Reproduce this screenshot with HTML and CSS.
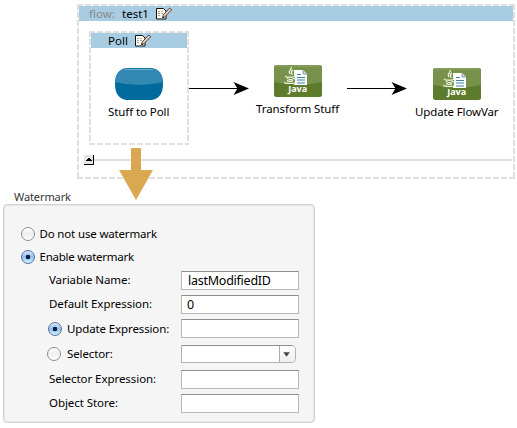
FILE: index.html
```html
<!DOCTYPE html>
<html lang="en">
<head>
<meta charset="utf-8">
<title>Poll watermark</title>
<link rel="stylesheet" href="styles.css">
</head>
<body>
<svg class="defs" width="0" height="0" aria-hidden="true">
  <defs>
    <symbol id="edit" viewBox="0 0 18 13">
      <path d="M1.500 1.500h7l2.500 2.500v8h-9.500z" fill="#fffff0" stroke="#111"/>
      <path d="M3 4.500h5M3 6.500h5M3 8.500h3" stroke="#aaa69a" stroke-dasharray="2 1"/>
      <path d="M7.500 11l.7-3L14.700 1l2 1.700L10 9.700z" fill="#ecd0c4" stroke="#30201c" stroke-width=".8"/>
      <path d="M7.500 11l.4-1.800 1.300 1.100z" fill="#111"/>
    </symbol>
    <symbol id="java" viewBox="0 0 48 32">
      <rect width="48" height="32" rx="2.500" fill="#5c7b2b"/>
      <path d="M0 2.500Q0 0 2.500 0h43Q48 0 48 2.500V17Q24 22 0 17z" fill="#78924b"/>
      <path d="M1 1h46" stroke="#9bb078" stroke-width=".7"/>
      <path d="M20 5h9l4 4v11H20z" fill="#fff"/>
      <path d="M29 5v4h4" fill="#c7d4d8" stroke="#668" stroke-width=".6"/>
      <path d="M23 9.500h4M23 12.500h8M23 15h8M23 18h8" stroke="#3781a5"/>
      <path d="M11 10.500h10v8H11z" fill="#78924b"/>
      <path d="M17 2c2 3-4 3-1 7M19 5c-3 2-1 3-1 5M12 11c-3 1 8 2 9 0M13 13c1 2 6 2 7 0M13 15.500c2 1.500 5 1 6 0M11 17c-2 2 10 2 11 0M20 11c4 0 2 3 0 3" fill="none" stroke="#f2f6e9" stroke-width="1.200"/>
      <text x="23.700" y="27" text-anchor="middle" class="java-word">Java</text>
    </symbol>
    <symbol id="arrow" viewBox="0 0 60 14">
      <path d="M0 7.500h50" stroke="#000"/>
      <path d="M44.500 1L60 7.500 44.500 14l4-6.500z"/>
    </symbol>
  </defs>
</svg>
<main class="page">
  <section class="flow">
    <header class="flow-head"><span class="muted">flow:</span><span class="flow-name">test1</span><svg class="edit"><use href="#edit"/></svg></header>
    <div class="lane">
      <div class="poll">
        <header class="poll-head"><span class="poll-name">Poll</span><svg class="edit"><use href="#edit"/></svg></header>
        <svg class="block" viewBox="0 0 48 32">
          <path d="M11 0h26Q48 2 48 16T37 32H11Q0 30 0 16T11 0z" fill="#026b9d"/>
          <path d="M11 0h26Q47 2 48 14Q24 20 0 14Q1 2 11 0z" fill="#3389b2"/>
          <path d="M12 .5h24" stroke="#1678a5"/><path d="M10 1.500h28" stroke="#6caecb"/>
        </svg>
        <span class="caption stuff">Stuff to Poll</span>
      </div>
      <svg class="arrow"><use href="#arrow"/></svg>
      <div class="step first"><svg class="block"><use href="#java"/></svg><span class="caption transform">Transform Stuff</span></div>
      <svg class="arrow"><use href="#arrow"/></svg>
      <div class="step second"><svg class="block"><use href="#java"/></svg><span class="caption update">Update FlowVar</span></div>
    </div>
    <footer class="flow-foot">
      <svg class="toggle" viewBox="0 0 10 10"><path d="M0 0h10v10H0z" fill="#e5e5e5"/><path d="M9.500 0v9.500H0" fill="none" stroke="#000"/><path d="M2 6V5h1V4h1V3h2v1h1v1h1v1z"/></svg>
      <span class="rule"></span>
    </footer>
  </section>
  <svg class="pointer" viewBox="0 0 34 52"><path d="M12 0h10v22h12L17 52 0 22h12z" fill="#daa850"/></svg>
  <section class="settings">
    <h1 class="legend">Watermark</h1>
    <form class="panel">
      <label class="choice"><i class="radio"></i><span class="t-not">Do not use watermark</span></label>
      <label class="choice"><i class="radio checked"></i><span class="t-enable">Enable watermark</span></label>
      <div class="fields">
        <span class="label">Variable Name:</span><div class="box value">lastModifiedID</div>
        <span class="label">Default Expression:</span><div class="box zero">0</div>
        <label class="sub"><i class="radio checked"></i><span class="t-upd">Update Expression:</span></label><div class="box"></div>
        <label class="sub selector"><i class="radio"></i><span class="t-upd">Selector:</span></label>
        <div class="combo"><svg class="drop" viewBox="0 0 16 16"><path d="M3.500 6h7L7 11z" fill="#444"/></svg></div>
        <span class="label">Selector Expression:</span><div class="box"></div>
        <span class="label">Object Store:</span><div class="box"></div>
      </div>
    </form>
  </section>
</main>
</body>
</html>
```
FILE: styles.css
```css
* { box-sizing: border-box; }
body { margin: 0; background: #fff; color: #000; font: 11.5px/16px "Noto Sans", "Open Sans", sans-serif; }
svg { display: block; flex: none; }
.defs { position: absolute; }
.page { position: relative; width: 517px; height: 428px; padding-top: 4px; overflow: hidden; }
span { white-space: nowrap; }

.flow, .poll {
  --h: repeating-linear-gradient(90deg, #dfdfdf 0 6px, #fff 6px 8px);
  --v: repeating-linear-gradient(180deg, #dfdfdf 0 6px, #fff 6px 8px);
  background: var(--h) 0 0 / 100% 2px no-repeat, var(--h) 0 100% / 100% 2px no-repeat, var(--v) 0 0 / 2px 100% no-repeat, var(--v) 100% 0 / 2px 100% no-repeat;
  padding: 2px;
}
.flow { width: 438px; height: 175px; margin-left: 77px; }
.flow-head, .poll-head { display: flex; align-items: center; height: 15px; background: #a8cde2; }
.flow-head { padding-left: 10px; }
.flow-name { width: 33px; }
.muted { width: 33px; color: #888; }
.edit { width: 18px; height: 13px; }
.lane { display: flex; align-items: flex-start; height: 124px; padding: 10px 0 0 10px; }
.poll { width: 100px; height: 114px; }
.poll-head { padding-left: 17px; }
.poll-name { width: 26px; }
.block { width: 48px; height: 32px; }
.poll .block { margin: 20px 0 0 24px; }
.caption { display: block; }
.stuff { margin: 4px 0 0 17px; letter-spacing: -.08px; }
.arrow { width: 60px; height: 14px; margin-top: 50px; }
.step { display: flex; flex-direction: column; }
.first { width: 98px; padding-top: 34px; }
.first .block { margin-left: 25px; }
.transform { margin: 4px 0 0 7px; letter-spacing: -.08px; }
.second { width: 106px; padding-top: 37px; }
.second .block { margin-left: 26px; }
.update { margin: 4px 0 0 8px; letter-spacing: -.13px; }
.java-word { font: bold 9px "Open Sans", sans-serif; fill: #fff; }
.flow-foot { display: flex; align-items: center; height: 30px; padding-left: 5px; }
.toggle { width: 10px; height: 10px; }
.rule { width: 418px; height: 2px; background: #dfdfdf; }
.pointer { position: absolute; left: 119px; top: 148px; width: 34px; height: 52px; }

.settings { padding-left: 3px; }
.legend { height: 16px; margin: 10px 0 -1px 11px; font-size: 11px; font-weight: 400; line-height: 16px; letter-spacing: -.1px; color: #333; }
.panel { width: 312px; height: 219px; padding: 17px 0 0 17px; border: 1px solid #d3d3d3; border-radius: 4px; background: #f5f5f5; box-shadow: inset 0 0 0 1px #e6e6e6; }
.choice { display: flex; align-items: center; gap: 4.5px; height: 23px; }
.t-not { letter-spacing: -.16px; }
.t-enable { letter-spacing: -.25px; }
.t-upd { letter-spacing: -.12px; }
.radio { flex: none; width: 14px; height: 14px; border: 1px solid #8e8e8e; border-radius: 50%; background: linear-gradient(#fff, #eee 50%, #fff); }
.checked { border-color: #5c6f99; background: radial-gradient(circle, #102035 0 2px, transparent 2.6px), linear-gradient(#d5e7fa, #8fc0f1 50%, #cff3ff); }
.fields { display: grid; grid-template-columns: 160px 118px; grid-template-rows: 24px 24px 25px 26px 24px 24px; align-items: center; }
.label { margin-left: 28px; letter-spacing: -.06px; }
.fields > * { position: relative; }
.sub { display: flex; align-items: center; gap: 5px; margin-left: 27px; }
.selector { margin-left: 26px; gap: 6px; }
.box { height: 19px; padding-left: 6px; border: 1px solid #b8b8b8; border-top-color: #8e8e8e; background: #fff; font-size: 12.5px; line-height: 17px; }
.value { letter-spacing: -.25px; }
.zero { padding-left: 5px; }
.combo { display: flex; justify-content: flex-end; width: 115px; height: 18px; border: 1px solid #b0b0b0; border-top-color: #8e8e8e; border-radius: 0 5px 5px 0; background: #fff; }
.drop { width: 16px; height: 16px; border-left: 1px solid #aaa; border-radius: 0 4px 4px 0; background: linear-gradient(#fff, #eee); }
```
